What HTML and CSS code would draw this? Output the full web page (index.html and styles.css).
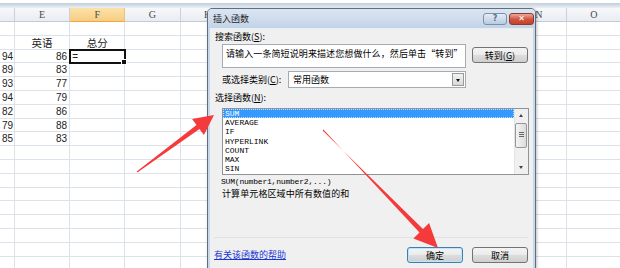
FILE: index.html
```html
<!DOCTYPE html>
<html>
<head>
	<title>插入函数</title>
	<meta charset="UTF-8">
	<link rel="stylesheet" href="styles.css">
</head>
<body>
	<div class="topbar"></div>
	<div class="sheet" id="sheet"></div>

	<div class="dialog">
		<div class="title-bar">
			<span class="title">插入函数</span>
			<span class="title-btn help-btn">?</span>
			<span class="title-btn close-btn">✕</span>
		</div>
		<div class="dialog-body">
			<div class="label">搜索函数(<u>S</u>):</div>
			<div class="search-row">
				<div class="search-box">请输入一条简短说明来描述您想做什么，然后单击“转到”</div>
				<button class="btn go-btn">转到(<u>G</u>)</button>
			</div>
			<div class="category-row">
				<span class="category-label">或选择类别(<u>C</u>):</span>
				<div class="select">常用函数<span class="select-arrow"></span></div>
			</div>
			<div class="label">选择函数(<u>N</u>):</div>
			<div class="listbox">
				<ul class="fn-list">
					<li class="selected">SUM</li>
					<li>AVERAGE</li>
					<li>IF</li>
					<li>HYPERLINK</li>
					<li>COUNT</li>
					<li>MAX</li>
					<li>SIN</li>
				</ul>
				<div class="scrollbar">
					<span class="arrow-up"></span>
					<span class="thumb"></span>
					<span class="arrow-down"></span>
				</div>
			</div>
			<div class="syntax">SUM(number1,number2,...)</div>
			<div class="desc">计算单元格区域中所有数值的和</div>
			<div class="separator"></div>
			<div class="footer">
				<a class="help-link" href="#">有关该函数的帮助</a>
				<button class="btn ok-btn">确定</button>
				<button class="btn">取消</button>
			</div>
		</div>
	</div>

	<svg class="arrows" width="620" height="268" viewBox="0 0 620 268">
		<polygon points="136.7,171.6 196.5,124.9 192.1,118.9 214,115 203.9,134.9 199.5,128.9 137.3,172.4" />
		<polygon points="323.4,129.6 419.5,232.5 413.4,238.5 438,248 429.1,223.1 423,229.1 322.6,130.4" />
	</svg>

	<script>
	const letters = ['D', 'E', 'F', 'G', 'H', 'I', 'J', 'K', 'L', 'M', 'N', 'O'];
	const data = [
		[],
		['', '英语', '总分'],
		['94', '86', '='],
		['89', '83'],
		['93', '77'],
		['94', '79'],
		['82', '86'],
		['79', '88'],
		['85', '83']
	];
	const sheet = document.getElementById('sheet');

	letters.forEach((letter, i) => {
		const head = document.createElement('div');
		head.className = 'col-head' + (letter === 'F' ? ' current' : '');
		head.textContent = i === 0 ? '' : letter;
		sheet.appendChild(head);
	});

	for (let r = 0; r < 18; r++) {
		const row = data[r] || [];
		letters.forEach((letter, c) => {
			const cell = document.createElement('div');
			const value = row[c] || '';
			cell.className = 'cell';
			if (/^\d+$/.test(value)) cell.className += ' num';
			if (r === 1) cell.className += ' title-cell';
			if (r === 2 && c === 2) cell.className += ' active';
			cell.textContent = value;
			sheet.appendChild(cell);
		});
	}
	</script>
</body>
</html>
```

FILE: styles.css
```css
body {
	margin: 0;
	width: 620px;
	height: 268px;
	overflow: hidden;
	position: relative;
	background: #fff;
	font-family: "Noto Sans CJK SC", sans-serif;
	color: #000;
}

.topbar {
	height: 8px;
	background: linear-gradient(#fff 0, #fff 3px, #c2cedc 3px, #d9e1ea 6px, #eef1f5 8px);
}

.sheet {
	display: grid;
	grid-template-columns: 15px repeat(11, 55.2px);
	grid-template-rows: 14px;
	grid-auto-rows: 13.8px;
}

.col-head {
	box-sizing: border-box;
	border-right: 1px solid #c9d1dc;
	border-bottom: 1px solid #c2cad6;
	background: linear-gradient(#f7f8fa, #e9ecf1);
	font-family: "Liberation Serif", serif;
	font-size: 10px;
	line-height: 13px;
	text-align: center;
	color: #4a4a4a;
}

.col-head.current {
	background: linear-gradient(#fbe2ab, #f7cd80);
	border-bottom-color: #eea647;
	border-right-color: #e9c383;
}

.cell {
	box-sizing: border-box;
	border-right: 1px solid #dde1e8;
	border-bottom: 1px solid #dde1e8;
	font-family: "Liberation Sans", sans-serif;
	font-size: 10px;
	line-height: 13px;
	padding: 0 2px;
	color: #222;
	white-space: nowrap;
	overflow: hidden;
}

.cell.num {
	text-align: right;
}

.cell.title-cell {
	text-align: center;
	font-family: "Noto Sans CJK SC", sans-serif;
	font-size: 10.5px;
}

.cell.active {
	position: relative;
	overflow: visible;
	outline: 2px solid #111;
	outline-offset: -1px;
}

.cell.active::after {
	content: "";
	position: absolute;
	right: -3px;
	bottom: -3px;
	width: 4px;
	height: 4px;
	background: #111;
	border: 1px solid #fff;
}

/* dialog */
.dialog {
	position: absolute;
	left: 207px;
	top: 8px;
	width: 329px;
	height: 272px;
	box-sizing: border-box;
	border: 1px solid #5e6f84;
	border-radius: 5px 5px 0 0;
	background: #c8d7e9;
	padding: 0 2px;
	box-shadow: 1px 1px 3px rgba(0, 0, 0, 0.25);
}

.title-bar {
	height: 19px;
	display: flex;
	align-items: flex-start;
	background: linear-gradient(#dbe6f3, #c3d3e7);
	margin: 0 -2px;
	padding: 0 1px 0 5px;
	border-radius: 4px 4px 0 0;
}

.title {
	flex: 1;
	font-size: 9px;
	line-height: 20px;
	color: #1e1e1e;
}

.title-btn {
	margin-top: 4px;
	height: 12px;
	box-sizing: border-box;
	border-radius: 3px;
	font-family: "DejaVu Sans", sans-serif;
	font-size: 8px;
	line-height: 10px;
	text-align: center;
	font-weight: bold;
}

.help-btn {
	width: 24px;
	margin-right: 2px;
	border: 1px solid #7e91ab;
	background: linear-gradient(#e4ecf6, #b9cbe0);
	color: #5a6d88;
}

.close-btn {
	width: 25px;
	border: 1px solid #8a3b2e;
	background: linear-gradient(#eba99a, #d0523d 55%, #c4412c);
	color: #fff;
}

.dialog-body {
	height: 250px;
	background: #f0f0f0;
	border-top: 1px solid #e8eef6;
	padding: 2px 5px 0 5px;
	font-size: 9px;
}

.label {
	line-height: 12px;
}

u {
	text-decoration: underline;
}

.search-row {
	display: flex;
	align-items: flex-start;
	gap: 6px;
	margin: 1px 0 0 7px;
}

.search-box {
	width: 244px;
	height: 24px;
	box-sizing: border-box;
	border: 1px solid #a6abb3;
	background: #fff;
	padding: 3px 3px 0 3px;
	line-height: 12px;
	letter-spacing: 0.1px;
	white-space: nowrap;
	overflow: hidden;
}

.btn {
	width: 56px;
	height: 16px;
	box-sizing: border-box;
	border: 1px solid #737373;
	border-radius: 3px;
	background: linear-gradient(#f4f4f4 0, #ebebeb 50%, #dddddd 51%, #cfcfcf 100%);
	font-family: "Noto Sans CJK SC", sans-serif;
	font-size: 9px;
	line-height: 13px;
	padding: 0;
	color: #000;
}

.go-btn {
	margin-top: 3px;
}

.category-row {
	display: flex;
	align-items: center;
	margin: 3px 0 0 7px;
	height: 17px;
}

.category-label {
	width: 66px;
	line-height: 12px;
}

.select {
	position: relative;
	width: 178px;
	height: 17px;
	box-sizing: border-box;
	border: 1px solid #a6abb3;
	background: #fff;
	padding-left: 4px;
	line-height: 15px;
}

.select-arrow {
	position: absolute;
	right: 1px;
	top: 1px;
	width: 12px;
	height: 13px;
	box-sizing: border-box;
	border: 1px solid #9a9a9a;
	background: linear-gradient(#f3f3f3, #d8d8d8);
}

.select-arrow::after {
	content: "";
	position: absolute;
	left: 3px;
	top: 5px;
	border-left: 2.5px solid transparent;
	border-right: 2.5px solid transparent;
	border-top: 3px solid #111;
}

.category-row + .label {
	margin-top: 4px;
}

.listbox {
	display: flex;
	margin: 4px -1px 0 7px;
	height: 67px;
	box-sizing: border-box;
	border: 1px solid #8e9299;
	background: #fff;
}

.fn-list {
	flex: 1;
	list-style: none;
	margin: 0;
	padding: 0;
	font-family: "Liberation Mono", monospace;
	font-size: 8px;
	line-height: 9.2px;
}

.fn-list li {
	padding-left: 2px;
}

.fn-list li.selected {
	background: #3399ff;
	color: #fff;
	outline: 1px dotted #c6e0ff;
	outline-offset: -1px;
}

.scrollbar {
	position: relative;
	width: 13px;
	background: #f0f0f0;
	border-left: 1px solid #e4e4e4;
}

.arrow-up,
.arrow-down {
	position: absolute;
	left: 4px;
	border-left: 2.5px solid transparent;
	border-right: 2.5px solid transparent;
}

.arrow-up {
	top: 5px;
	border-bottom: 3px solid #444;
}

.arrow-down {
	bottom: 5px;
	border-top: 3px solid #444;
}

.thumb {
	position: absolute;
	left: 0;
	top: 14px;
	width: 12px;
	height: 25px;
	box-sizing: border-box;
	border: 1px solid #979797;
	border-radius: 2px;
	background: linear-gradient(to right, #f4f4f4, #dcdcdc);
}

.thumb::after {
	content: "";
	position: absolute;
	left: 3px;
	top: 8px;
	width: 5px;
	height: 6px;
	background: repeating-linear-gradient(#666 0 1px, transparent 1px 2px);
}

.syntax {
	margin: 1px 0 0 6px;
	font-family: "Liberation Mono", monospace;
	font-size: 8px;
	line-height: 11px;
	letter-spacing: -0.2px;
}

.desc {
	margin: 1px 0 0 7px;
	line-height: 12px;
	letter-spacing: 0.1px;
}

.separator {
	margin: 37px 0 0 -1px;
	height: 1px;
	background: #dde3e8;
}

.footer {
	display: flex;
	align-items: center;
	gap: 9px;
	margin-top: 9px;
}

.help-link {
	flex: 1;
	margin-left: -1px;
	color: #1a35d6;
	text-decoration: underline;
	line-height: 12px;
}

.ok-btn {
	border-color: #3c7fb1;
	box-shadow: inset 0 0 0 1px #bfe3f8;
}

.arrows {
	position: absolute;
	left: 0;
	top: 0;
	pointer-events: none;
}

.arrows polygon {
	fill: #f43a3a;
}
```
